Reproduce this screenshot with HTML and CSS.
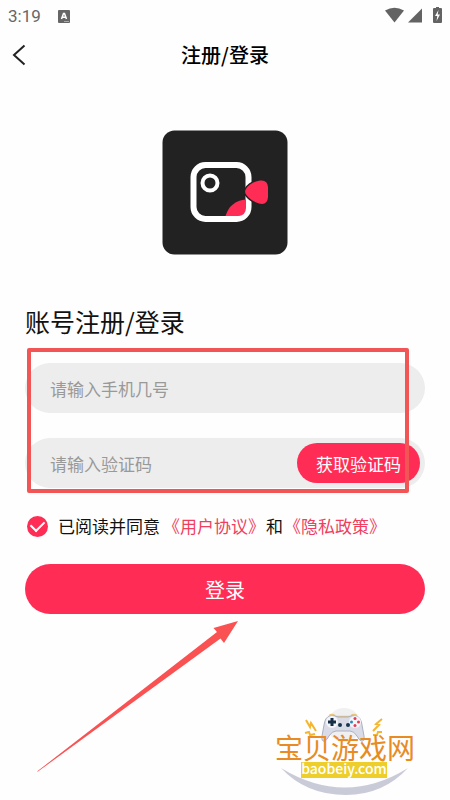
FILE: index.html
```html
<!DOCTYPE html>
<html lang="zh-CN">
<head>
<meta charset="utf-8">
<meta name="viewport" content="width=device-width, initial-scale=1">
<title>注册/登录</title>
<link rel="stylesheet" href="styles.css">
</head>
<body>
<div class="status">
  <span class="time">3:19</span>
  <svg class="app-badge" width="12" height="13" viewBox="0 0 12 13" aria-hidden="true">
    <rect width="12" height="13" rx="1" fill="#666"/>
    <path d="M3.500 9 5.500 3.500h1L8.500 9M4.500 7.300h3" fill="none" stroke="#fff" stroke-width="1.500"/>
    <path d="M6 11.500h5" stroke="#aaa" stroke-width="1"/>
  </svg>
  <svg class="signals" width="58" height="18" viewBox="0 0 58 18" fill="#636363" aria-hidden="true">
    <path d="M1 3.500Q10.500-2 20 3.500L10.500 15.500Z"/>
    <path d="M38 1.500v14H24Z"/>
    <path d="M50 1h2V0h3v1h2q1 0 1 1v13q0 1-1 1h-7q-1 0-1-1V2q0-1 1-1Z"/>
    <path d="M54.500 3 51 9h2.300l-.8 5 3.500-6.500h-2.300Z" fill="#fff"/>
  </svg>
</div>
<header class="bar">
  <button class="back" type="button" aria-label="返回">
    <svg width="14" height="22" viewBox="0 0 14 22"><path d="M12.500 1.500 2 11l10.500 9.500" fill="none" stroke="#222" stroke-width="2"/></svg>
  </button>
  <h1>注册/登录</h1>
</header>
<main>
  <svg class="logo" width="126" height="126" viewBox="0 0 126 126" aria-hidden="true">
    <rect x=".5" y=".5" width="125" height="124" rx="12" fill="#222"/>
    <rect x="31.500" y="35" width="55" height="54" rx="12" fill="none" stroke="#fff" stroke-width="6"/>
    <path d="M63.500 86Q68 71 84 69.500V77.500Q84 86 75.500 86Z" fill="#ff2d55"/>
    <circle cx="48" cy="53" r="7.500" fill="none" stroke="#fff" stroke-width="4"/>
    <path d="M84 59Q88 52.500 98 50.500Q105.500 49.500 106 57V67Q105.500 75.500 97 73.500Q88 70.500 84.500 65Q82 62 84 59Z" fill="#ff2d55" stroke="#222" stroke-width="3" paint-order="stroke"/>
  </svg>
  <h2>账号注册/登录</h2>
  <form>
    <div class="fields">
      <div class="field"><input type="tel" aria-label="手机号" placeholder="请输入手机几号"></div>
      <div class="field">
        <input type="text" aria-label="验证码" placeholder="请输入验证码">
        <button class="code" type="button">获取验证码</button>
      </div>
      <div class="highlight"></div>
    </div>
    <div class="agree">
      <input id="agree" type="checkbox" checked>
      <label for="agree">已阅读并同意</label>
      <a href="#terms">《用户协议》</a><span>和</span><a href="#privacy">《隐私政策》</a>
    </div>
    <button class="login" type="button">登录</button>
  </form>
</main>
<div class="bottom">
  <svg class="arrow" width="202" height="152" viewBox="0 0 202 152" aria-hidden="true">
    <path d="M0 150.500 180 11 176.500 7 201 0 187 22 183.500 17.500 1 150.500Z" fill="#fa5252"/>
  </svg>
  <svg class="brand" width="144" height="90" viewBox="0 0 144 90">
    <circle cx="69" cy="18" r="17" fill="#f0f0f1"/>
    <path d="M6 61Q70 100 133 61Q108 88 71 88Q31 88 6 61Z" fill="#c9cbd8"/>
    <path d="M54 8.500q3-2 6 0M76 8.500q3-2 6 0M60 9.500h16" fill="none" stroke="#eac37c" stroke-width="1.500"/>
    <path d="M55 9q5-1 8 1h10q4-2 8-1 5 1 6 9l2 11q1 6-3 5-2-1-4-5-3-5-7-5H61q-4 0-7 5-2 4-4 5-4 1-3-5l2-11q1-8 6-9Z" fill="#d9dbe6" stroke="#adb0c1" stroke-width="1"/>
    <circle cx="57" cy="15" r="6" fill="#f4f5f9"/>
    <circle cx="80" cy="15" r="6" fill="#f4f5f9"/>
    <path d="M57 11v8M53 15h8" stroke="#172f46" stroke-width="3"/>
    <circle cx="65" cy="18" r="2" fill="#18364e"/><circle cx="73" cy="18" r="2" fill="#18364e"/>
    <circle cx="80" cy="11.500" r="1.500" fill="#e63d52"/><circle cx="80" cy="18.500" r="1.500" fill="#e63d52"/>
    <circle cx="76.500" cy="15" r="1.500" fill="#288ab7"/><circle cx="83.500" cy="15" r="1.500" fill="#e63d52"/>
    <path d="M31 13 35 20 36 16 41 24M30 26 34 25 35 28 40 27M107 12 101 17 104 18 98 24M107 25 103 25 102 28 98 28" fill="none" stroke="#f5b52e" stroke-width="2"/>
    <text class="brand-name" x="70" y="52" text-anchor="middle">宝贝游戏网</text>
    <rect x="26" y="55" width="86" height="16" fill="#edce2b"/>
    <text class="brand-site" x="69" y="67" text-anchor="middle">baobeiy.com</text>
  </svg>
</div>
</body>
</html>
```
FILE: styles.css
```css
* { box-sizing: border-box; }

body {
  margin: 0;
  min-height: 100vh;
  display: flex;
  flex-direction: column;
  background: #fefefe;
  color: #111;
  font-family: "Noto Sans CJK SC", sans-serif;
  font-size: 17px;
}

button, input { font: inherit; }

button { border: 0; padding: 0; cursor: pointer; }

h1, h2 { margin: 0; }

.status {
  display: flex;
  align-items: center;
  height: 32px;
  padding: 0 8px;
}

.time {
  font: 17px/32px Roboto, sans-serif;
  color: #666;
}

.app-badge { margin-left: 17px; }

.signals { margin-left: auto; }

.bar {
  display: grid;
  grid-template-columns: 32px 1fr 32px;
  align-items: center;
  height: 46px;
}

.back {
  display: flex;
  padding-left: 12px;
  background: none;
}

h1 {
  font-size: 20px;
  line-height: 30px;
  font-weight: 500;
  color: #000;
  text-align: center;
}

main { padding: 52px 25px 0; }

.logo {
  display: block;
  margin: 0 auto;
}

h2 {
  margin-top: 45px;
  font-size: 25px;
  line-height: 40px;
  font-weight: 400;
}

.fields {
  position: relative;
  display: grid;
  gap: 25px;
  margin-top: 22px;
}

.field {
  display: flex;
  align-items: center;
  height: 50px;
  padding-right: 5px;
  border-radius: 25px;
  background: #ededed;
}

.field input {
  flex: 1;
  min-width: 0;
  height: 50px;
  padding: 0 0 0 25px;
  border: 0;
  outline: 0;
  background: none;
}

.field input::placeholder { color: #999; opacity: 1; }

.code {
  width: 123px;
  height: 40px;
  border-radius: 20px;
  background: #ff2d55;
  color: #fff;
}

.highlight {
  position: absolute;
  inset: -15px 16px -5px 2px;
  border: 4px solid #f25555;
  border-radius: 2px;
  pointer-events: none;
}

.agree {
  display: flex;
  align-items: center;
  height: 26px;
  margin-top: 25px;
  padding-left: 2px;
  line-height: 26px;
  white-space: nowrap;
}

.agree input {
  appearance: none;
  width: 21px;
  height: 21px;
  margin: 0 10px 0 0;
  border-radius: 50%;
  background: #ff2d55;
  display: grid;
  place-items: center;
}

.agree input:checked::before {
  content: "";
  width: 11px;
  height: 7px;
  margin-bottom: 3px;
  border: solid #fff;
  border-width: 0 0 2px 2px;
  transform: rotate(-45deg);
}

.agree label { margin-right: 3px; }

.agree span { margin: 0 1px; }

.agree a { color: #f03e60; text-decoration: none; }

.login {
  display: block;
  width: 100%;
  height: 50px;
  margin-top: 25px;
  border-radius: 25px;
  background: #ff2d55;
  color: #fff;
  font-size: 20px;
}

.bottom {
  flex: 1;
  display: flex;
  justify-content: space-between;
  padding: 7px 31px 3px 37px;
}

.arrow { flex: none; }

.brand { flex: none; align-self: flex-end; }

.brand-name {
  font-size: 28px;
  font-weight: 400;
  fill: #e88b25;
}

.brand-site {
  font-size: 14px;
  font-weight: 500;
  fill: #fff;
}
```
